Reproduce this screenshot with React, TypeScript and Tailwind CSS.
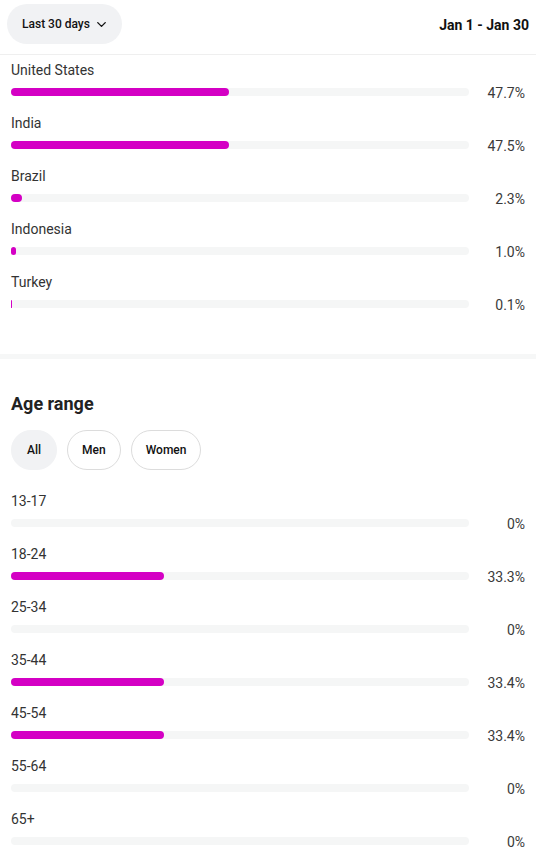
import { ChevronDown } from 'lucide-react';

const countries = [
  { name: 'United States', pct: 47.7 },
  { name: 'India', pct: 47.5 },
  { name: 'Brazil', pct: 2.3 },
  { name: 'Indonesia', pct: 1.0 },
  { name: 'Turkey', pct: 0.1 },
];

const ages = [
  { name: '13-17', pct: 0, label: '0%' },
  { name: '18-24', pct: 33.3, label: '33.3%' },
  { name: '25-34', pct: 0, label: '0%' },
  { name: '35-44', pct: 33.4, label: '33.4%' },
  { name: '45-54', pct: 33.4, label: '33.4%' },
  { name: '55-64', pct: 0, label: '0%' },
  { name: '65+', pct: 0, label: '0%' },
];

function StatRow({ name, pct, label }: { name: string; pct: number; label: string }) {
  return (
    <div className="pl-[11px] pr-[11px] pb-[17px]">
      <div className="text-[14px] leading-[20px] text-[#333]">{name}</div>
      <div className="mt-[8px] flex h-[8px] items-center">
        <div className="h-[8px] flex-1 rounded-full bg-[#f5f6f6]">
          {pct > 0 && (
            <div
              className="h-full rounded-full bg-[#d400c4]"
              style={{ width: `${pct}%`, minWidth: pct < 0.5 ? 1 : undefined }}
            />
          )}
        </div>
        <div className="mt-[1px] w-[56px] shrink-0 text-right text-[14px] leading-[20px] text-[#3a3a3a]">{label}</div>
      </div>
    </div>
  );
}

export default function App() {
  return (
    <div className="w-[536px] min-h-[852px] bg-white font-['Roboto','Liberation_Sans',sans-serif]">
      {/* Header */}
      <div className="flex h-[55px] items-start justify-between border-b border-[#efefef] pl-[7px] pr-[7px] pt-[4px]">
        <button className="flex h-[40px] items-center gap-[4px] rounded-full bg-[#f1f2f4] pl-[15px] pr-[13px] text-[12px] font-medium text-[#111]">
          Last 30 days
          <ChevronDown size={15} strokeWidth={2.2} />
        </button>
        <div className="mt-[11px] text-[14px] font-bold text-[#111]">Jan 1 - Jan 30</div>
      </div>

      {/* Countries */}
      <div className="pt-[5px] pb-[29px]">
        {countries.map((c) => (
          <StatRow key={c.name} name={c.name} pct={c.pct} label={`${c.pct.toFixed(1)}%`} />
        ))}
      </div>

      <div className="h-[5px] bg-[#f6f7f7]" />

      {/* Age range */}
      <div className="pt-[33px]">
        <h2 className="px-[11px] text-[18px] font-bold leading-[24px] text-[#222]">Age range</h2>
        <div className="mt-[14px] flex gap-[10px] px-[11px]">
          <button className="h-[40px] rounded-full border border-[#f1f2f4] bg-[#f1f2f4] px-[15px] text-[12px] font-medium text-[#111]">
            All
          </button>
          <button className="h-[40px] rounded-full border border-[#dcdcdc] bg-white px-[14px] text-[12px] font-medium text-[#111]">
            Men
          </button>
          <button className="h-[40px] rounded-full border border-[#dcdcdc] bg-white px-[14px] text-[12px] font-medium text-[#111]">
            Women
          </button>
        </div>
        <div className="pt-[21px]">
          {ages.map((a) => (
            <StatRow key={a.name} name={a.name} pct={a.pct} label={a.label} />
          ))}
        </div>
      </div>
    </div>
  );
}
